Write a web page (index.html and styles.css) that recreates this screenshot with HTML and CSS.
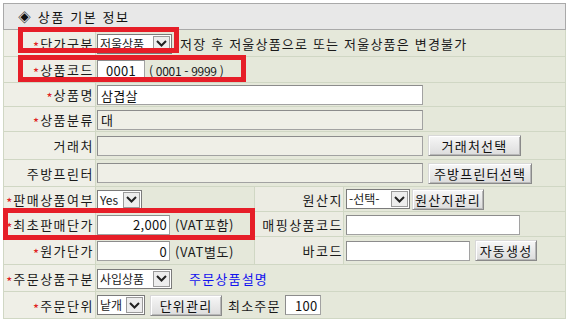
FILE: index.html
```html
<!DOCTYPE html>
<html lang="ko">
<head>
<meta charset="utf-8">
<title>상품 기본 정보</title>
<link rel="stylesheet" href="styles.css">
</head>
<body>
<div class="panel">
  <div class="title">◈ 상품 기본 정보</div>
  <table class="form">
    <colgroup><col class="c1"><col class="c2"><col class="c3"><col class="c4"></colgroup>
    <tr class="r27">
      <th><span class="req">*</span>단가구분</th>
      <td colspan="3"><span class="sel w75"><span class="sel-text">저울상품</span><span class="sel-btn"><svg width="11" height="7" viewBox="0 0 11 7"><path d="M1 1 L5.5 5.5 L10 1" fill="none" stroke="#222" stroke-width="2"/></svg></span></span><span class="note">저장 후 저울상품으로 또는 저울상품은 변경불가</span></td>
    </tr>
    <tr class="r26">
      <th><span class="req">*</span>상품코드</th>
      <td colspan="3"><input class="inp w48 center" value="0001"><span class="range">( 0001 - 9999 )</span></td>
    </tr>
    <tr class="r24">
      <th><span class="req">*</span>상품명</th>
      <td colspan="3"><input class="inp wide" value="삼겹살"></td>
    </tr>
    <tr class="r25">
      <th><span class="req">*</span>상품분류</th>
      <td colspan="3"><input class="inp wide ro" value="대" readonly></td>
    </tr>
    <tr class="r28">
      <th>거래처</th>
      <td colspan="3"><input class="inp wide ro" value="" readonly><button class="btn bw93">거래처선택</button></td>
    </tr>
    <tr class="r27">
      <th>주방프린터</th>
      <td colspan="3"><input class="inp wide ro" value="" readonly><button class="btn bw104">주방프린터선택</button></td>
    </tr>
    <tr class="r25">
      <th><span class="req">*</span>판매상품여부</th>
      <td class="mid"><span class="sel w45"><span class="sel-text">Yes</span><span class="sel-btn"><svg width="11" height="7" viewBox="0 0 11 7"><path d="M1 1 L5.5 5.5 L10 1" fill="none" stroke="#222" stroke-width="2"/></svg></span></span></td>
      <th class="sub">원산지</th>
      <td class="right"><span class="sel w64"><span class="sel-text">-선택-</span><span class="sel-btn"><svg width="11" height="7" viewBox="0 0 11 7"><path d="M1 1 L5.5 5.5 L10 1" fill="none" stroke="#222" stroke-width="2"/></svg></span></span><button class="btn bw72 tight">원산지관리</button></td>
    </tr>
    <tr class="r25">
      <th><span class="req">*</span>최초판매단가</th>
      <td class="mid"><input class="inp w72 num" value="2,000"><span class="vat">(VAT포함)</span></td>
      <th class="sub">매핑상품코드</th>
      <td class="right"><input class="inp w173" value=""></td>
    </tr>
    <tr class="r28">
      <th><span class="req">*</span>원가단가</th>
      <td class="mid"><input class="inp w72 num" value="0"><span class="vat">(VAT별도)</span></td>
      <th class="sub">바코드</th>
      <td class="right"><input class="inp w123" value=""><button class="btn bw62">자동생성</button></td>
    </tr>
    <tr class="r27">
      <th><span class="req">*</span>주문상품구분</th>
      <td colspan="3"><span class="sel w75"><span class="sel-text">사입상품</span><span class="sel-btn"><svg width="11" height="7" viewBox="0 0 11 7"><path d="M1 1 L5.5 5.5 L10 1" fill="none" stroke="#222" stroke-width="2"/></svg></span></span><a class="link" href="#">주문상품설명</a></td>
    </tr>
    <tr class="r27">
      <th><span class="req">*</span>주문단위</th>
      <td colspan="3"><span class="sel w48"><span class="sel-text">낱개</span><span class="sel-btn"><svg width="11" height="7" viewBox="0 0 11 7"><path d="M1 1 L5.5 5.5 L10 1" fill="none" stroke="#222" stroke-width="2"/></svg></span></span><button class="btn bw72 gap5">단위관리</button><span class="minlabel">최소주문</span><input class="inp w36 num" value="100"></td>
    </tr>
  </table>
</div>
<div class="mark m1"></div>
<div class="mark m2"></div>
<div class="mark m3"></div>
</body>
</html>
```

FILE: styles.css
```css
html, body {
  margin: 0;
  padding: 0;
  background: #ffffff;
}
body {
  font-family: "Noto Sans CJK KR", "Noto Sans", sans-serif;
  font-size: 13px;
  color: #1a1a1a;
  letter-spacing: 1.2px;
}
.panel {
  margin: 3px 0 0 3px;
  width: 563px;
}
.title {
  height: 25px;
  line-height: 25px;
  background: #e8e8e8;
  border: 1px solid #a9a9a9;
  padding-left: 14px;
  font-size: 13px;
  letter-spacing: 1.6px;
  color: #111;
}
.form {
  width: 563px;
  table-layout: fixed;
  border-collapse: separate;
  border-spacing: 0;
  border-left: 1px solid #d0d7c4;
  border-right: 1px solid #d0d7c4;
}
.c1 { width: 92px; }
.c2 { width: 159px; }
.c3 { width: 89px; }
.c4 { width: 221px; }
.form th, .form td {
  padding: 0;
  border-bottom: 1px solid #d0d7c4;
  border-right: 1px solid #d0d7c4;
  vertical-align: middle;
  white-space: nowrap;
  overflow: visible;
}
.form tr > :last-child { border-right: none; }
.form th {
  background: #efefe7;
  font-weight: normal;
  text-align: right;
  padding-right: 1px;
  letter-spacing: 1.5px;
}
.form td {
  background: #e5e8da;
  padding-left: 1px;
}
.form th.sub {
  background: #ececE3;
  padding-right: 0;
}
.form td.right { padding-left: 2px; }
.r24 { height: 24px; }
.r25 { height: 25px; }
.r26 { height: 26px; }
.r27 { height: 27px; }
.r28 { height: 28px; }
.req {
  color: #e02020;
  font-size: 13px;
  letter-spacing: 0;
  margin-right: 1px;
  position: relative;
  top: 3px;
}
.sel {
  display: inline-flex;
  vertical-align: middle;
  height: 20px;
  box-sizing: border-box;
  border: 1px solid #7b7b7b;
  background: #fff;
  padding: 1px;
}
.sel-text {
  flex: 1;
  line-height: 16px;
  padding-left: 1px;
  font-size: 12px;
  letter-spacing: 0;
  white-space: nowrap;
}
.sel-btn {
  flex: none;
  width: 17px;
  box-sizing: border-box;
  border: 1px solid #9a9a9a;
  background: #ededed;
  display: flex;
  align-items: center;
  justify-content: center;
}
.w75 { width: 75px; }
.w45 { width: 45px; }
.w64 { width: 64px; }
.w48 { width: 48px; }
.inp {
  box-sizing: border-box;
  height: 20px;
  border: 1px solid #a2a2a2;
  border-top-color: #8c8c8c;
  border-left-color: #8c8c8c;
  background: #fff;
  font-family: inherit;
  font-size: 13px;
  letter-spacing: 0.3px;
  color: #111;
  padding: 0 3px;
  margin: 0;
  vertical-align: middle;
  outline: none;
}
.inp.ro { background: #efefe7; }
.inp.center { text-align: center; }
.inp.num { text-align: right; padding-right: 2px; }
.wide { width: 326px; }
.w72 { width: 73px; }
.w173 { width: 174px; }
.w123 { width: 124px; }
.w36 { width: 36px; }
.btn {
  box-sizing: border-box;
  height: 21px;
  margin: 0 0 0 5px;
  padding: 0;
  font-family: inherit;
  font-size: 13px;
  letter-spacing: 1.2px;
  color: #111;
  background: linear-gradient(#f7f7f7, #dcdcdc);
  border: 1px solid #8a8a8a;
  border-top-color: #d8d8d8;
  border-left-color: #d8d8d8;
  box-shadow: inset 1px 1px 0 #fff, inset -1px -1px 0 #b8b8b8;
  vertical-align: middle;
}
.btn.tight { margin-left: 2px; }
.bw93 { width: 93px; }
.bw104 { width: 104px; }
.bw72 { width: 72px; }
.bw62 { width: 62px; }
.note {
  margin-left: 8px;
  vertical-align: middle;
}
.range {
  margin-left: 4px;
  font-size: 12px;
  letter-spacing: -0.3px;
  vertical-align: middle;
}
.vat {
  margin-left: 5px;
  letter-spacing: 0.6px;
  vertical-align: middle;
}
.link {
  margin-left: 17px;
  color: #1212ee;
  text-decoration: none;
  vertical-align: middle;
}
.minlabel {
  margin: 0 4px 0 6px;
  vertical-align: middle;
}
.mark {
  position: absolute;
  box-sizing: border-box;
  border: 5px solid #e61e28;
}
.m1 { left: 18px; top: 27px; width: 161px; height: 26px; }
.m2 { left: 18px; top: 55px; width: 228px; height: 27px; }
.m3 { left: 3px; top: 208px; width: 252px; height: 32px; }
```
